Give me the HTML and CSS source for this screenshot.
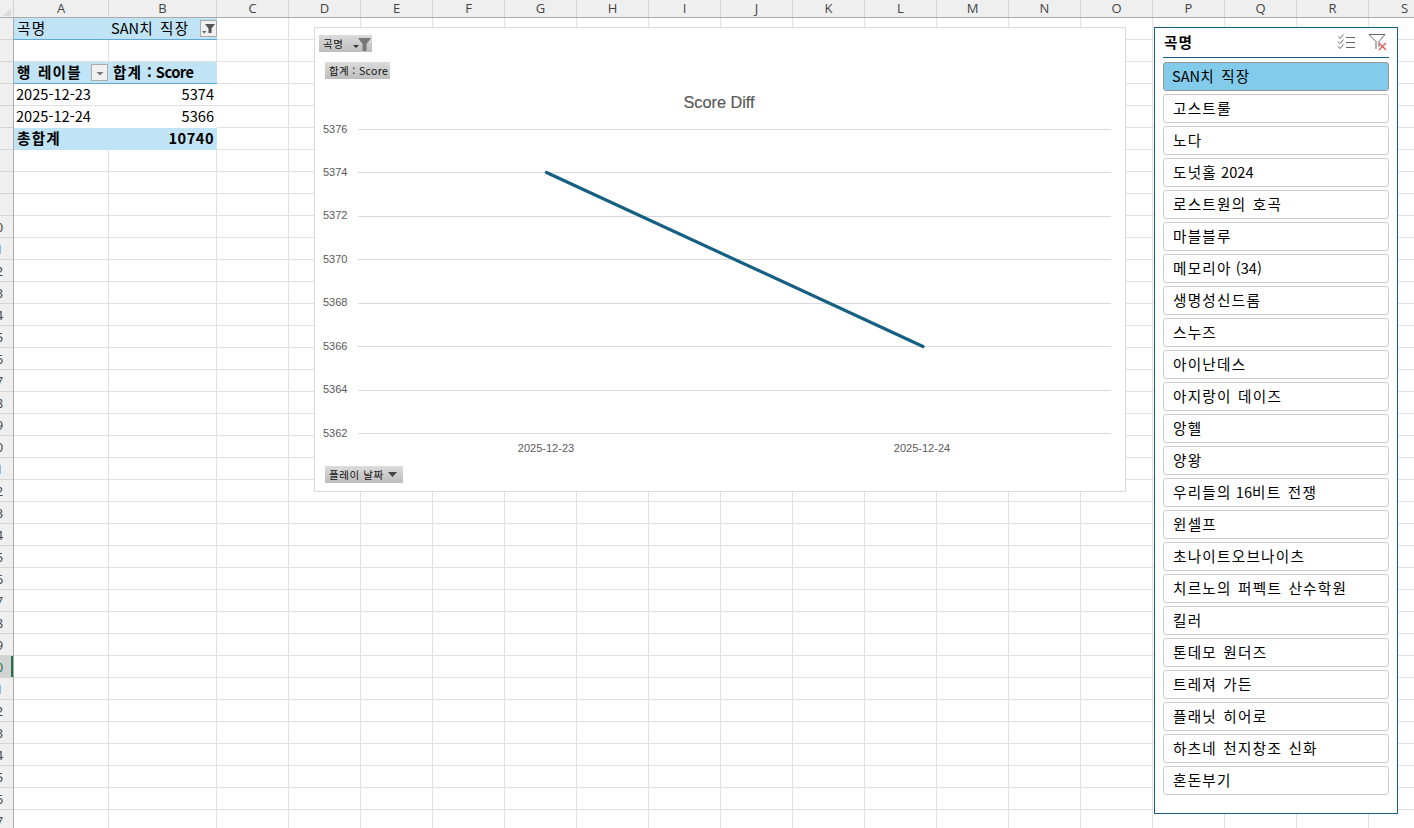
FILE: index.html
```html
<!DOCTYPE html>
<html lang="ko">
<head>
    <meta charset="UTF-8">
    <title>Score Diff</title>
    <link rel="stylesheet" href="styles.css">
</head>
<body>
    <div class="sheet">
        <!-- Column headers -->
        <div class="col-bar">
            <div class="corner"></div>
            <div class="col col-a">A</div>
            <div class="col col-b">B</div>
            <div class="col">C</div>
            <div class="col">D</div>
            <div class="col">E</div>
            <div class="col">F</div>
            <div class="col">G</div>
            <div class="col">H</div>
            <div class="col">I</div>
            <div class="col">J</div>
            <div class="col">K</div>
            <div class="col">L</div>
            <div class="col">M</div>
            <div class="col">N</div>
            <div class="col">O</div>
            <div class="col">P</div>
            <div class="col">Q</div>
            <div class="col">R</div>
            <div class="col">S</div>
        </div>

        <div class="sheet-body">
            <!-- Row headers -->
            <div class="row-bar">
                <div class="row-num"><span>1</span></div>
                <div class="row-num"><span>2</span></div>
                <div class="row-num"><span>3</span></div>
                <div class="row-num"><span>4</span></div>
                <div class="row-num"><span>5</span></div>
                <div class="row-num"><span>6</span></div>
                <div class="row-num"><span>7</span></div>
                <div class="row-num"><span>8</span></div>
                <div class="row-num"><span>9</span></div>
                <div class="row-num"><span>10</span></div>
                <div class="row-num"><span>11</span></div>
                <div class="row-num"><span>12</span></div>
                <div class="row-num"><span>13</span></div>
                <div class="row-num"><span>14</span></div>
                <div class="row-num"><span>15</span></div>
                <div class="row-num"><span>16</span></div>
                <div class="row-num"><span>17</span></div>
                <div class="row-num"><span>18</span></div>
                <div class="row-num"><span>19</span></div>
                <div class="row-num"><span>20</span></div>
                <div class="row-num"><span>21</span></div>
                <div class="row-num"><span>22</span></div>
                <div class="row-num"><span>23</span></div>
                <div class="row-num"><span>24</span></div>
                <div class="row-num"><span>25</span></div>
                <div class="row-num"><span>26</span></div>
                <div class="row-num"><span>27</span></div>
                <div class="row-num"><span>28</span></div>
                <div class="row-num"><span>29</span></div>
                <div class="row-num active"><span>30</span></div>
                <div class="row-num"><span>31</span></div>
                <div class="row-num"><span>32</span></div>
                <div class="row-num"><span>33</span></div>
                <div class="row-num"><span>34</span></div>
                <div class="row-num"><span>35</span></div>
                <div class="row-num"><span>36</span></div>
                <div class="row-num"><span>37</span></div>
            </div>

            <div class="cells">
                <!-- Pivot table -->
                <div class="pivot">
                    <div class="cell head">곡명</div>
                    <div class="cell head filter-cell">
                        <span><span class="latin">SAN</span>치 직장</span>
                        <div class="drop-btn">
                            <svg width="15" height="15" viewBox="0 0 15 15">
                                <path d="M4 3 H14 L10.5 7.5 V12 H7.5 V7.5 Z" fill="#555"/>
                                <path d="M1 10 H5.5 L3.2 12.5 Z" fill="#666"/>
                            </svg>
                        </div>
                    </div>
                    <div class="cell blank"></div>
                    <div class="cell blank"></div>
                    <div class="cell head strong">
                        <span>행 레이블</span>
                        <div class="drop-btn small">
                            <svg width="14" height="14" viewBox="0 0 14 14">
                                <path d="M3.5 6 H10.5 L7 9.5 Z" fill="#777"/>
                            </svg>
                        </div>
                    </div>
                    <div class="cell head strong score-head"><span>합계 <span class="latin">: Score</span></span></div>
                    <div class="cell body-cell line latin">2025-12-23</div>
                    <div class="cell body-cell line num latin">5374</div>
                    <div class="cell body-cell latin">2025-12-24</div>
                    <div class="cell body-cell num latin">5366</div>
                    <div class="cell total strong">총합계</div>
                    <div class="cell total strong num total-num">10740</div>
                </div>

                <!-- Chart -->
                <div class="chart">
                    <div class="field-btn field-song">곡명
                        <svg width="20" height="16" viewBox="0 0 20 16">
                            <path d="M1 9 H7 L4 12 Z" fill="#333"/>
                            <path d="M6 2 H19 L14.5 8 V15 H10.5 V8 Z" fill="#777"/>
                        </svg>
                    </div>
                    <div class="field-btn field-value">합계 : Score</div>
                    <div class="chart-title">Score Diff</div>
                    <svg class="plot" width="810" height="340" viewBox="0 0 810 340">
                        <g stroke="#d9d9d9" stroke-width="1">
                            <path d="M43 11.5 H796"/>
                            <path d="M43 54.5 H796"/>
                            <path d="M43 98.5 H796"/>
                            <path d="M43 141.5 H796"/>
                            <path d="M43 185.5 H796"/>
                            <path d="M43 228.5 H796"/>
                            <path d="M43 272.5 H796"/>
                            <path d="M43 315.5 H796"/>
                        </g>
                        <g class="tick">
                            <text x="8" y="15">5376</text>
                            <text x="8" y="58">5374</text>
                            <text x="8" y="101">5372</text>
                            <text x="8" y="145">5370</text>
                            <text x="8" y="188">5368</text>
                            <text x="8" y="232">5366</text>
                            <text x="8" y="275">5364</text>
                            <text x="8" y="319">5362</text>
                            <text x="231" y="334" text-anchor="middle">2025-12-23</text>
                            <text x="607" y="334" text-anchor="middle">2025-12-24</text>
                        </g>
                        <path d="M231.5 54.5 L608 228.5" stroke="#156082" stroke-width="3.2" stroke-linecap="round" fill="none"/>
                    </svg>
                    <div class="field-btn field-date">플레이 날짜
                        <svg width="10" height="8" viewBox="0 0 10 8">
                            <path d="M0 1 H9 L4.5 6 Z" fill="#444"/>
                        </svg>
                    </div>
                </div>

                <!-- Slicer -->
                <div class="slicer">
                    <div class="slicer-head">
                        <span class="slicer-title">곡명</span>
                        <div class="slicer-tools">
                            <svg width="20" height="18" viewBox="0 0 20 18" fill="none" stroke="#666">
                                <path d="M1 3.5 L3 5.5 L6.5 1.5"/>
                                <path d="M1 8.5 L3 10.5 L6.5 6.5"/>
                                <path d="M1 13.5 L3 15.5 L6.5 11.5"/>
                                <path d="M9 4.5 H18"/>
                                <path d="M9 9.5 H18"/>
                                <path d="M9 14.5 H18"/>
                            </svg>
                            <svg width="20" height="18" viewBox="0 0 20 18" fill="none">
                                <path d="M1 1.5 H17 L11 8.5 V14 M8 16 V8.5 L1 1.5" stroke="#666"/>
                                <path d="M11 10 L18 17 M18 10 L11 17" stroke="#e0575a" stroke-width="1.4"/>
                            </svg>
                        </div>
                    </div>
                    <div class="slicer-list">
                        <div class="slicer-item selected"><span class="latin">SAN</span>치 직장</div>
                        <div class="slicer-item">고스트룰</div>
                        <div class="slicer-item">노다</div>
                        <div class="slicer-item">도넛홀<span class="latin"> 2024</span></div>
                        <div class="slicer-item">로스트원의 호곡</div>
                        <div class="slicer-item">마블블루</div>
                        <div class="slicer-item">메모리아<span class="latin"> (34)</span></div>
                        <div class="slicer-item">생명성신드롬</div>
                        <div class="slicer-item">스누즈</div>
                        <div class="slicer-item">아이난데스</div>
                        <div class="slicer-item">아지랑이 데이즈</div>
                        <div class="slicer-item">앙헬</div>
                        <div class="slicer-item">양왕</div>
                        <div class="slicer-item">우리들의<span class="latin"> 16</span>비트 전쟁</div>
                        <div class="slicer-item">윈셀프</div>
                        <div class="slicer-item">초나이트오브나이츠</div>
                        <div class="slicer-item">치르노의 퍼펙트 산수학원</div>
                        <div class="slicer-item">킬러</div>
                        <div class="slicer-item">톤데모 원더즈</div>
                        <div class="slicer-item">트레져 가든</div>
                        <div class="slicer-item">플래닛 히어로</div>
                        <div class="slicer-item">하츠네 천지창조 신화</div>
                        <div class="slicer-item">혼돈부기</div>
                    </div>
                </div>
            </div>
        </div>
    </div>
</body>
</html>
```

FILE: styles.css
```css
* { margin: 0; padding: 0; box-sizing: border-box; }
body { background: #fff; color: #000; font-family: "Noto Sans CJK KR", "Noto Sans", sans-serif; overflow: hidden; }

/* Main Container */
.sheet { width: 1414px; height: 828px; overflow: hidden; display: flex; flex-direction: column; }
.sheet-body { display: flex; flex: 1; min-height: 0; }

/* Hangul runs are spaced out, latin and digits stay tight */
.latin { letter-spacing: 0; word-spacing: 0; }

/* Column headers */
.col-bar { display: flex; flex: none; height: 18px; background: #efefef; border-bottom: 1px solid #ababab; }
.corner { flex: none; width: 14px; height: 17px; position: relative; border-right: 1px solid #d4d4d4; }
.corner::after { content: ""; position: absolute; right: 2px; bottom: 1px; border-style: solid; border-width: 0 0 8px 8px; border-color: transparent transparent #dcdcdc transparent; }
.col { flex: none; width: 72px; height: 17px; border-right: 1px solid #d4d4d4; color: #444; font: 13px/17px "Open Sans", sans-serif; text-align: center; }
.col-a { width: 95px; }
.col-b { width: 108px; }

/* Row headers */
.row-bar { flex: none; width: 14px; background: #efefef; border-right: 1px solid #ababab; overflow: hidden; }
.row-num { height: 22px; border-bottom: 1px solid #d4d4d4; color: #444; font: 13.5px/22px "Open Sans", sans-serif; overflow: hidden; }
.row-num span { display: block; width: 27px; margin-left: -18px; text-align: center; }
.row-num.active { background: #d3d3d3; box-shadow: inset -2px 0 0 #217346; color: #217346; }

/* Grid */
.cells { flex: 1; position: relative; background:
    linear-gradient(#e1e1e1, #e1e1e1) 94px 0 / 1px 100% no-repeat,
    linear-gradient(#e1e1e1, #e1e1e1) 202px 0 / 1px 100% no-repeat,
    repeating-linear-gradient(to bottom, transparent 0 21px, #e1e1e1 21px 22px); }
.cells::before { content: ""; position: absolute; top: 0; bottom: 0; left: 203px; right: 0; background: repeating-linear-gradient(to right, transparent 0 71px, #e1e1e1 71px 72px); }

/* Pivot table */
.pivot { position: relative; display: grid; grid-template-columns: 95px 108px; grid-auto-rows: 22px; width: 203px; font-size: 14.6px; letter-spacing: 1.2px; word-spacing: 1px; }
.cell { display: flex; align-items: center; justify-content: space-between; padding: 0 3px 2px 3px; white-space: nowrap; overflow: hidden; }
.blank { padding: 0; }
.head { background: #c0e4f5; border-bottom: 1px solid #5ea9d4; }
.filter-cell { padding: 0 0 2px 2px; }
.score-head { padding-left: 4px; letter-spacing: 1px; word-spacing: 0; }
.score-head .latin { letter-spacing: -0.5px; word-spacing: 1px; }
.body-cell { background: #fff; padding: 0 3px 3px 2px; }
.body-cell.line { border-bottom: 1px solid #e1e1e1; padding-bottom: 2px; }
.total { background: #c0e4f5; padding-bottom: 3px; }
.total-num { letter-spacing: 0.5px; }
.strong { font-weight: 700; }
.num { justify-content: flex-end; }
.drop-btn { flex: none; width: 17px; height: 17px; margin-top: 2px; display: flex; align-items: center; justify-content: center; background: #f0f0f0; border: 1px solid #ababab; }
.drop-btn.small { margin: 2px -2px 0 0; }

/* Chart */
.chart { position: absolute; left: 300px; top: 9px; width: 812px; height: 465px; background: #fff; border: 1px solid #d9d9d9; display: flex; flex-direction: column; align-items: flex-start; }
.field-btn { display: flex; align-items: center; height: 17px; background: linear-gradient(#dcdcdc, #bdbdbd); color: #111; font-size: 10.5px; letter-spacing: 0.6px; white-space: nowrap; }
.field-song { margin: 7px 0 0 4px; width: 53px; padding-left: 4px; justify-content: space-between; }
.field-value { margin: 10px 0 0 10px; width: 65px; padding-left: 4px; letter-spacing: 0.35px; }
.field-date { margin: 8px 0 0 10px; width: 78px; padding-left: 4px; gap: 4px; }
.chart-title { width: 100%; margin-top: 13px; padding-right: 2px; height: 20px; text-align: center; color: #595959; font: 16.3px/20px "Liberation Sans", sans-serif; -webkit-text-stroke: 0.2px #595959; }
.plot { display: block; flex: none; margin-top: 6px; }
.tick { fill: #595959; font: 11px "Liberation Sans", sans-serif; }

/* Slicer */
.slicer { position: absolute; left: 1140px; top: 9px; width: 244px; height: 787px; background: #fff; border: 1px solid #156082; padding: 0 8px; }
.slicer-head { display: flex; align-items: center; justify-content: space-between; height: 30px; border-bottom: 1px solid #156082; }
.slicer-title { margin: -3px 0 0 1px; font-size: 14.6px; font-weight: 700; letter-spacing: 1px; }
.slicer-tools { display: flex; gap: 11px; margin: -2px 1px 0 0; }
.slicer-list { display: flex; flex-direction: column; gap: 3px; margin-top: 4px; }
.slicer-item { height: 29px; padding: 0 9px; border: 1px solid #ccc; border-radius: 3px; font-size: 14.6px; line-height: 25px; letter-spacing: 1.25px; word-spacing: 1px; white-space: nowrap; }
.slicer-item.selected { background: #83cbeb; border-color: #999; padding-left: 8px; }
```
